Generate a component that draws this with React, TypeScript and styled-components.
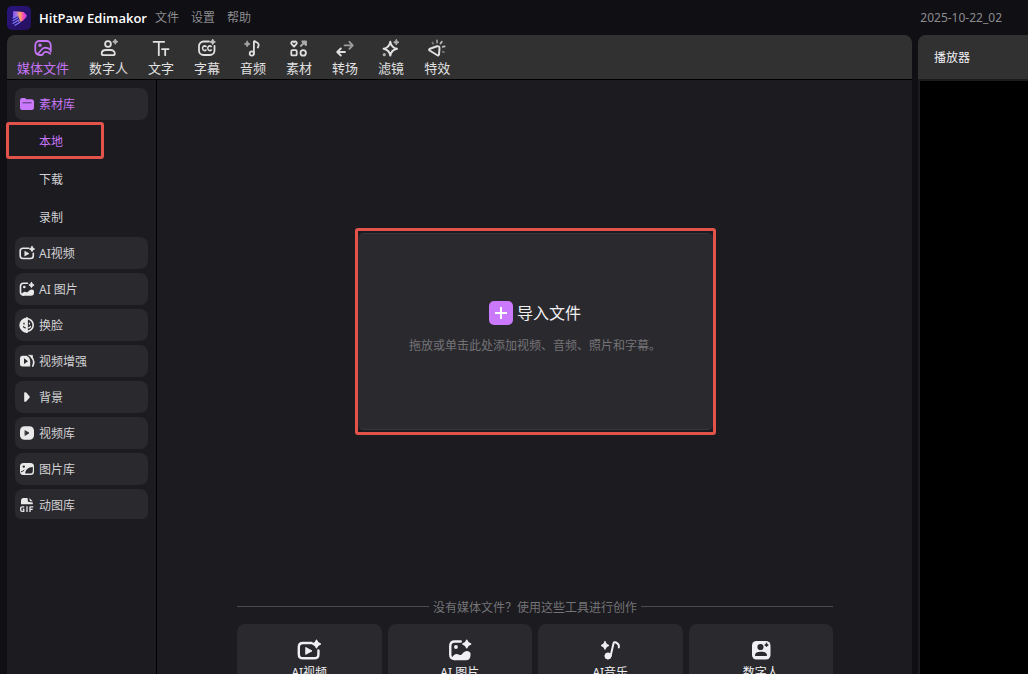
import React from "react";
import styled, { createGlobalStyle, css } from "styled-components";

const color = {
  shell: "#0f0f14",
  panel: "#1c1b20",
  bar: "#313132",
  card: "#2a292e",
  accent: "#c675f6",
  accentSolid: "#ca78fc",
  text: "#d2d2d4",
  bright: "#f0f0f2",
  muted: "#8c8c8f",
  faint: "#747477",
  mark: "#e2534b",
};

const GlobalStyle = createGlobalStyle`
  *, *::before, *::after { box-sizing: border-box; }
  body {
    margin: 0;
    background: ${color.shell};
    color: ${color.text};
    font: 12px/16px "Noto Sans", "Noto Sans CJK SC", sans-serif;
  }
  button {
    margin: 0;
    padding: 0;
    border: 0;
    background: none;
    color: inherit;
    font: inherit;
    cursor: pointer;
  }
  svg { display: block; flex: none; }
`;

const Shell = styled.div`
  display: flex;
  flex-direction: column;
  height: 100vh;
  overflow: hidden;
`;

const TitleBar = styled.header`
  display: flex;
  flex: none;
  align-items: center;
  height: 35px;
  padding: 0 26px 0 7px;
`;

const AppName = styled.h1`
  margin: 0 8px;
  color: #fff;
  font-family: "Open Sans", "Noto Sans", sans-serif;
  font-size: 13px;
  line-height: 16px;
  font-weight: 600;
`;

const Menu = styled.nav`
  display: flex;
  gap: 12px;
  color: ${color.muted};
`;

const ProjectName = styled.span`
  margin-left: auto;
  color: ${color.muted};
`;

const Panels = styled.div`
  display: grid;
  flex: 1;
  grid-template-columns: minmax(0, 1fr) 110px;
  gap: 6px;
  min-height: 0;
  padding-left: 7px;
`;

const Panel = styled.section`
  display: flex;
  flex-direction: column;
  min-width: 0;
  min-height: 0;
  background: ${color.panel};
  border-radius: 8px 8px 0 0;
`;

const ToolTabs = styled.nav`
  display: flex;
  flex: none;
  gap: 20px;
  height: 45px;
  padding: 4px 10px 0;
  background: ${color.bar};
  border-bottom: 1px solid #000;
  border-radius: 8px 8px 0 0;
`;

const ToolTab = styled.button<{ $active?: boolean }>`
  display: flex;
  flex-direction: column;
  align-items: center;
  gap: 2px;
  height: 40px;
  color: ${(p) => (p.$active ? color.accent : "#e0e0e0")};
  font-size: 13px;
  line-height: 18px;
`;

const Body = styled.div`
  display: flex;
  flex: 1;
  min-height: 0;
`;

const Sidebar = styled.aside`
  display: flex;
  flex: none;
  flex-direction: column;
  gap: 4px;
  width: 150px;
  padding: 8px 8px 0;
  border-right: 1px solid #000;
`;

const Category = styled.button<{ $active?: boolean }>`
  display: flex;
  flex: none;
  align-items: center;
  gap: 4px;
  height: 32px;
  padding: 0 4px;
  border-radius: 8px;
  background: ${color.card};
  color: ${(p) => (p.$active ? color.accent : color.text)};

  svg {
    color: #e9e9ea;
  }

  &:last-child {
    height: 30px;
    padding-top: 2px;
    border-radius: 8px 8px 6px 6px;
  }
`;

const CategoryLabel = styled.span`
  padding-top: 2px;
`;

const SubList = styled.div`
  display: flex;
  flex-direction: column;
  margin: -2px 0 -3px;
`;

const SubItem = styled.button<{ $active?: boolean }>`
  position: relative;
  height: 38px;
  padding: 2px 0 0 24px;
  text-align: left;
  color: ${(p) => (p.$active ? color.accent : color.text)};
`;

const markBorder = css`
  border: 3px solid ${color.mark};
  border-radius: 3px;
`;

const Mark = styled.span`
  position: absolute;
  top: 0;
  left: -9px;
  width: 98px;
  height: 37px;
  ${markBorder}
`;

const Workspace = styled.main`
  display: flex;
  flex: 1;
  flex-direction: column;
  align-items: center;
  min-width: 0;
  padding: 148px 79px 0 80px;
  overflow: hidden;
`;

const DropFrame = styled.div`
  flex: none;
  width: 361px;
  height: 207px;
  padding: 2px 0;
  ${markBorder}
`;

const DropZone = styled.button`
  display: flex;
  flex-direction: column;
  align-items: center;
  gap: 13px;
  width: 100%;
  height: 197px;
  padding-top: 67px;
  background: ${color.card};
  border: solid #38373d;
  border-width: 1px 0;
  border-radius: 6px;
  color: ${color.faint};
`;

const DropTitle = styled.span`
  display: flex;
  align-items: center;
  gap: 4px;
  color: ${color.bright};
  font-size: 16px;
  line-height: 24px;
`;

const Plus = styled.span`
  display: grid;
  place-items: center;
  width: 24px;
  height: 24px;
  border-radius: 5px;
  background: ${color.accentSolid};
`;

const Divider = styled.div`
  display: flex;
  flex: none;
  align-items: center;
  gap: 4px;
  width: 100%;
  margin-top: 161px;
  color: ${color.faint};

  &::before,
  &::after {
    content: "";
    flex: 1;
    height: 1px;
    background: #4b4b4f;
  }
`;

const DividerText = styled.span`
  padding-top: 4px;
`;

const Shortcuts = styled.div`
  display: grid;
  flex: none;
  grid-template-columns: repeat(4, minmax(0, 1fr));
  gap: 6px;
  width: 100%;
  margin-top: 8px;
`;

const Shortcut = styled.button`
  display: flex;
  flex-direction: column;
  align-items: center;
  gap: 3px;
  height: 64px;
  padding-top: 14px;
  border-radius: 8px;
  background: ${color.card};
  color: ${color.bright};
`;

const PlayerHeader = styled.h2`
  flex: none;
  height: 44px;
  margin: 0;
  padding: 0 16px;
  border-radius: 8px 0 0 0;
  background: ${color.bar};
  color: ${color.bright};
  font-size: 12px;
  font-weight: 400;
  line-height: 46px;
`;

const Screen = styled.div`
  flex: 1;
  margin: 2px 0 0 2px;
  background: #000;
`;

const Svg = ({ size = 18, box = 18, children }: { size?: number; box?: number; children: React.ReactNode }) => (
  <svg
    width={size}
    height={size}
    viewBox={`0 0 ${box} ${box}`}
    fill="none"
    stroke="currentColor"
    strokeWidth={box === 18 ? 1.8 : 1.6}
    strokeLinecap="round"
    strokeLinejoin="round"
    aria-hidden
  >
    {children}
  </svg>
);

/* Solid four-pointed star centred on (x, y). */
const Spark = ({ x, y, r, opacity = 1 }: { x: number; y: number; r: number; opacity?: number }) => (
  <path
    d={`M${x} ${y - r}Q${x + r * 0.2} ${y - r * 0.2} ${x + r} ${y}Q${x + r * 0.2} ${y + r * 0.2} ${x} ${y + r}Q${x - r * 0.2} ${y + r * 0.2} ${x - r} ${y}Q${x - r * 0.2} ${y - r * 0.2} ${x} ${y - r}Z`}
    fill="currentColor"
    strokeWidth={0.9}
    opacity={opacity}
  />
);

const Logo = () => (
  <svg width="24" height="24" viewBox="0 0 24 24" aria-hidden>
    <defs>
      <linearGradient id="logo-bg" x1="0" y1="0" x2="1" y2="1">
        <stop offset="0" stopColor="#2a1580" />
        <stop offset="1" stopColor="#25105e" />
      </linearGradient>
      <linearGradient id="logo-play" x1="0" y1="0" x2="1" y2="0">
        <stop offset="0" stopColor="#7a52f4" />
        <stop offset="0.25" stopColor="#b070d8" />
        <stop offset="0.5" stopColor="#ffa860" />
        <stop offset="0.75" stopColor="#f54bb4" />
        <stop offset="1" stopColor="#b03cf0" />
      </linearGradient>
    </defs>
    <rect width="24" height="24" rx="5" fill="url(#logo-bg)" />
    <path d="M6 6.500Q6 4.800 8 5.200L16.500 6L19.300 8.500Q20.500 9.800 19.300 11.200L15.500 15L11.500 16.500L6 12Z" fill="url(#logo-play)" />
    <path d="M6 14.300L11.500 11.300M6 17.300L12.500 13.300M8.500 19.200L13.500 15.800" stroke="#2a1580" strokeWidth="2.200" />
    <path d="M6 12L10 9.800M6 14.800L11 11.800M6 17.500L12 13.800M8 19.200L13 16.200" stroke="#7d78f2" strokeWidth="1.200" strokeLinecap="round" />
  </svg>
);

const MediaIcon = () => (
  <Svg>
    <path d="M16.700 10V6.200A4.200 4.200 0 0 0 12.500 2H5.500A4.200 4.200 0 0 0 1.300 6.200V11.800A4.200 4.200 0 0 0 5.500 16H7.500M16.700 10V12.500" />
    <circle cx="6" cy="6.300" r="1.100" strokeWidth="1.400" />
    <path d="M3 14.800C6.500 14.500 6.500 8.800 11 8.600C13.500 8.600 15 9.500 16.500 10.800M8.500 16C9.500 12.300 13 11.800 16.300 14.800" strokeWidth="1.600" />
  </Svg>
);

const PersonIcon = () => (
  <Svg>
    <circle cx="8" cy="5" r="2.900" />
    <path d="M6 11H10.500C13 11 14.800 12.500 14.800 14.500Q14.800 16.200 13 16.200H3.500Q1.700 16.200 1.700 14.500C1.700 12.500 3.500 11 6 11Z" />
    <Spark x={15.3} y={2.7} r={2.6} opacity={0.75} />
  </Svg>
);

const TextIcon = () => (
  <Svg>
    <path d="M1.500 2.800H12.200M6.800 2.800V16.200M10 10.200H16.500M13.200 10.200V16.200" />
  </Svg>
);

const CaptionIcon = () => (
  <Svg>
    <path d="M11 2.500H5.500A4.500 4.500 0 0 0 1 7V11.500A4.500 4.500 0 0 0 5.500 16H12A4.500 4.500 0 0 0 16.500 11.500V7" />
    <path d="M8 7.500A2.200 2.200 0 1 0 8 11M13.200 7.500A2.200 2.200 0 1 0 13.200 11" strokeWidth="1.600" />
    <Spark x={14.7} y={2.9} r={2.7} opacity={0.85} />
  </Svg>
);

const MusicIcon = () => (
  <Svg>
    <circle cx="7.800" cy="14.500" r="2.100" />
    <path d="M9.900 14.500V2.500Q10.500 1.800 12 3C14.500 4 15.500 5.500 13.800 8.500" />
    <Spark x={3.2} y={5} r={2.8} opacity={0.65} />
  </Svg>
);

const ElementsIcon = () => (
  <Svg>
    <path d="M4 7.600L1.700 5.200C.4 3.500 2.600 1.300 4 3.200C5.400 1.300 7.600 3.500 6.300 5.200Z" />
    <rect x="1.300" y="11.200" width="5.400" height="5.200" rx="1" />
    <circle cx="13.200" cy="13.900" r="2.700" />
    <g opacity=".7">
      <path d="M10.800 7L15 3" />
      <path d="M12.200 2.300H16V6Z" fill="currentColor" />
    </g>
  </Svg>
);

const TransitionIcon = () => (
  <Svg>
    <path d="M9 13H1.200M4.800 9.500L1.200 13L4.800 16.500" />
    <path d="M8.500 6.300H16.800M13.400 2.800L16.800 6.300L13.400 9.800" opacity=".62" />
  </Svg>
);

const FilterIcon = () => (
  <Svg>
    <path d="M8.300 2.800Q9.300 8.500 15 9.800Q9.300 11 8.300 16.600Q7.300 11 1.600 9.800Q7.300 8.500 8.300 2.800Z" strokeWidth="2" />
    <Spark x={14.3} y={3.3} r={2.7} opacity={0.7} />
    <circle cx="2.300" cy="15.700" r=".7" fill="currentColor" opacity=".7" />
  </Svg>
);

const EffectIcon = () => (
  <Svg>
    <path d="M2 9.700L9 7.200Q11.500 6.800 11.500 9.200L11 15.500Q10.500 17.200 9 16L1.600 11.500Q.5 10.400 2 9.700Z" strokeWidth="2" />
    <path d="M4.500 3.500L5.200 4.800M14.800 12.600L16 13.200" opacity=".4" />
    <path d="M9 1.500V3.500" opacity=".6" />
    <path d="M13.800 2.700L12.500 4.500M14.700 7.800L16.600 7.400" opacity=".8" />
  </Svg>
);

const FolderIcon = () => (
  <Svg size={16} box={16}>
    <path
      d="M1 4.500Q1 2 3.500 2H5.500Q6.500 2 7.300 3.200H12.500Q15 3.200 15 5.700V11.500Q15 14 12.500 14H3.500Q1 14 1 11.500Z"
      fill={color.accentSolid}
      stroke="none"
    />
    <path d="M4 6.700H12" stroke="#7a4c9a" strokeWidth="1.500" />
  </Svg>
);

const AiVideoIcon = ({ size = 16 }: { size?: number }) => (
  <Svg size={size} box={16}>
    <path d="M9.800 3.300H4Q1.200 3.300 1.200 6V10.800Q1.200 13.500 4 13.500H11.500Q14.300 13.500 14.300 10.800V8.300" />
    <path d="M6 6.400L10 8.600L6 10.800Z" fill="currentColor" strokeWidth=".6" />
    <Spark x={13} y={4} r={2.6} />
  </Svg>
);

const AiImageIcon = ({ size = 16 }: { size?: number }) => (
  <Svg size={size} box={16}>
    <path d="M8.500 2.300H4.500Q1.500 2.300 1.500 5.300V11Q1.500 14 4.500 14" />
    <circle cx="5.300" cy="6" r="1.300" fill="currentColor" stroke="none" />
    <path d="M2.500 13.500C4 10.500 5.500 10.300 7.500 11.200C9.500 12 10 8.600 12.500 8.600Q14.300 8.600 15 10V11.500Q15 14.800 12 14.800H4.500Q3 14.800 2.500 13.500Z" fill="currentColor" stroke="none" />
    <Spark x={12.5} y={4} r={2.6} />
  </Svg>
);

const FaceIcon = () => (
  <Svg size={16} box={16}>
    <circle cx="8" cy="8" r="6.200" />
    <path d="M8 1V15.500A7 7 0 0 1 8 1Z" fill="currentColor" strokeWidth=".8" />
    <path d="M8 .8V15.400" />
    <path d="M10.500 6.200V7M9.500 10.800Q11 10.600 11.500 9.500" strokeWidth="1.300" />
    <path d="M5 6.200V7M4.500 9.800Q5 10.700 6.300 10.800" stroke={color.card} strokeWidth="1.300" />
  </Svg>
);

const EnhanceIcon = () => (
  <Svg size={16} box={16}>
    <path d="M3.500 2.700H7.500Q11.200 4.500 11.200 8.500V13.500H3.500Q1 13.500 1 11V5.200Q1 2.700 3.500 2.700Z" fill="currentColor" stroke="none" />
    <path d="M12.500 4Q16.200 8 13.800 13" strokeWidth="1.700" />
    <path d="M9.800 2.300H13.500V5.800Q12 3.800 9.800 2.300Z" fill="currentColor" strokeWidth=".6" />
    <path d="M5 5.300L9 8.200L5 11.100Z" fill={color.card} stroke="none" />
  </Svg>
);

const CaretIcon = () => (
  <Svg size={16} box={16}>
    <path d="M5.200 3.500Q6.200 2.800 7.200 3.500L10.500 7.200Q11 8 10.500 8.800L7.200 12.500Q6.200 13.200 5.200 12.500Z" fill="currentColor" stroke="none" />
  </Svg>
);

const VideoLibIcon = () => (
  <Svg size={16} box={16}>
    <rect x="1" y="1.300" width="14" height="13.400" rx="4.500" fill="currentColor" stroke="none" />
    <path d="M6.300 5.800L10 8L6.300 10.200Z" fill={color.card} stroke={color.card} strokeWidth=".8" />
  </Svg>
);

const ImageLibIcon = () => (
  <Svg size={16} box={16}>
    <rect x="1" y="2" width="14" height="12" rx="3.500" fill="currentColor" stroke="none" />
    <circle cx="4.800" cy="5.600" r="1.200" fill={color.card} stroke="none" />
    <path d="M6.200 12.600C6.200 9 9 6.200 13.800 6V10.200Q13.800 12.600 11.500 12.600Z" fill={color.card} stroke="none" />
    <path d="M2.300 10.800Q4 10.500 5 9.300" stroke={color.card} strokeWidth="1" />
  </Svg>
);

const GifIcon = () => (
  <Svg size={16} box={16}>
    <path d="M2 7.300V3.500Q2 1 4.200 1H8.500L9 4.800L13.800 5.500V7.300Z" fill="currentColor" stroke="none" />
    <path d="M10.200 1L13.700 4.300H11Z" fill="currentColor" stroke="none" />
    <path d="M5.300 9.900H3.300Q1.700 9.900 1.700 11.400V13Q1.700 14.400 3.300 14.400H4.800V12.200H3.800M8 9.200V15M11 15V9.900H14.300M11 12.300H13.700" strokeWidth="1.300" strokeLinecap="butt" />
  </Svg>
);

const AiMusicIcon = () => (
  <Svg size={24} box={24}>
    <circle cx="10" cy="18" r="3.100" fill="currentColor" strokeWidth="1" />
    <path d="M12.700 17.500L15.500 5.500Q16 3.500 18 4.500Q21.500 6.200 20.800 9.500" strokeWidth="2" />
    <Spark x={7} y={7.5} r={4} />
  </Svg>
);

const AvatarIcon = () => (
  <Svg size={24} box={24}>
    <rect x="3" y="3" width="18.500" height="18.500" rx="4.500" fill="currentColor" stroke="none" />
    <circle cx="11.500" cy="9" r="3.100" fill={color.card} stroke="none" />
    <path d="M6 17.500C6 14.800 8.500 13.800 12 13.800C15.500 13.800 18 14.800 18 17.500Q18 18 17 18H7Q6 18 6 17.500Z" fill={color.card} stroke="none" />
    <g color={color.card}>
      <Spark x={17.5} y={7} r={1.8} />
    </g>
  </Svg>
);

const tools = [
  { label: "媒体文件", Icon: MediaIcon },
  { label: "数字人", Icon: PersonIcon },
  { label: "文字", Icon: TextIcon },
  { label: "字幕", Icon: CaptionIcon },
  { label: "音频", Icon: MusicIcon },
  { label: "素材", Icon: ElementsIcon },
  { label: "转场", Icon: TransitionIcon },
  { label: "滤镜", Icon: FilterIcon },
  { label: "特效", Icon: EffectIcon },
];

const categories = [
  { label: "AI视频", Icon: AiVideoIcon },
  { label: "AI 图片", Icon: AiImageIcon },
  { label: "换脸", Icon: FaceIcon },
  { label: "视频增强", Icon: EnhanceIcon },
  { label: "背景", Icon: CaretIcon },
  { label: "视频库", Icon: VideoLibIcon },
  { label: "图片库", Icon: ImageLibIcon },
  { label: "动图库", Icon: GifIcon },
];

export default function App() {
  return (
    <>
      <GlobalStyle />
      <Shell>
        <TitleBar>
          <Logo />
          <AppName>HitPaw Edimakor</AppName>
          <Menu>
            <button>文件</button>
            <button>设置</button>
            <button>帮助</button>
          </Menu>
          <ProjectName>2025-10-22_02</ProjectName>
        </TitleBar>
        <Panels>
          <Panel>
            <ToolTabs>
              {tools.map(({ label, Icon }, i) => (
                <ToolTab key={label} $active={i === 0}>
                  <Icon />
                  {label}
                </ToolTab>
              ))}
            </ToolTabs>
            <Body>
              <Sidebar>
                <Category $active>
                  <FolderIcon />
                  <CategoryLabel>素材库</CategoryLabel>
                </Category>
                <SubList>
                  <SubItem $active>
                    本地
                    <Mark />
                  </SubItem>
                  <SubItem>下载</SubItem>
                  <SubItem>录制</SubItem>
                </SubList>
                {categories.map(({ label, Icon }) => (
                  <Category key={label}>
                    <Icon />
                    <CategoryLabel>{label}</CategoryLabel>
                  </Category>
                ))}
              </Sidebar>
              <Workspace>
                <DropFrame>
                  <DropZone>
                    <DropTitle>
                      <Plus>
                        <svg width="12" height="12" viewBox="0 0 12 12" stroke="#fff" strokeWidth="2" aria-hidden>
                          <path d="M6 0V12M0 6H12" />
                        </svg>
                      </Plus>
                      导入文件
                    </DropTitle>
                    <span>拖放或单击此处添加视频、音频、照片和字幕。</span>
                  </DropZone>
                </DropFrame>
                <Divider>
                  <DividerText>没有媒体文件？使用这些工具进行创作</DividerText>
                </Divider>
                <Shortcuts>
                  <Shortcut>
                    <AiVideoIcon size={24} />
                    AI视频
                  </Shortcut>
                  <Shortcut>
                    <AiImageIcon size={24} />
                    AI 图片
                  </Shortcut>
                  <Shortcut>
                    <AiMusicIcon />
                    AI音乐
                  </Shortcut>
                  <Shortcut>
                    <AvatarIcon />
                    数字人
                  </Shortcut>
                </Shortcuts>
              </Workspace>
            </Body>
          </Panel>
          <Panel>
            <PlayerHeader>播放器</PlayerHeader>
            <Screen />
          </Panel>
        </Panels>
      </Shell>
    </>
  );
}
